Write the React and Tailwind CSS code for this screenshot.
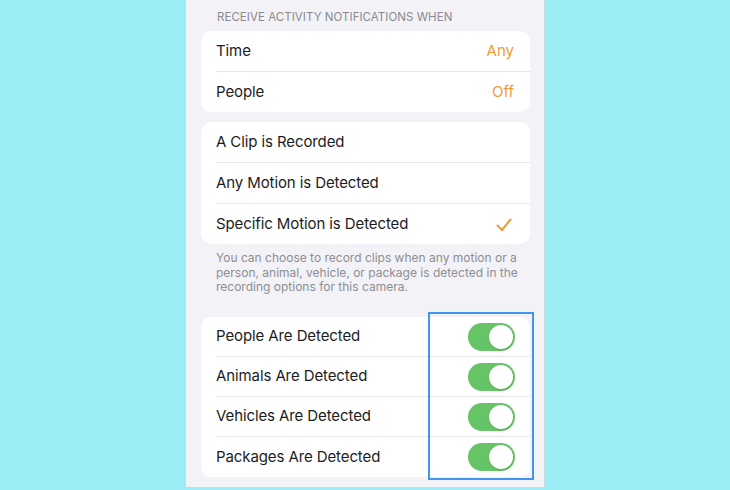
import React from "react";

const font = { fontFamily: "Inter, 'Noto Sans', 'Liberation Sans', sans-serif" };

function Row({ label, right, last, h = "h-[40px]" }) {
  return (
    <div>
      <div className={`flex items-center justify-between pl-[15px] pr-[16px] pt-[1px] ${h}`}>
        <span className="text-[15px] text-[#1c1c1e] tracking-[-0.1px]">{label}</span>
        {right}
      </div>
      {!last && <div className="ml-[15px] h-px bg-[#e6e6eb]" />}
    </div>
  );
}

function Toggle() {
  return (
    <div className="w-[47px] h-[28px] -mr-[1px] rounded-full bg-[#65c466] flex items-center justify-end pr-[2px]">
      <div className="w-[24px] h-[24px] rounded-full bg-white shadow-[0_1px_2px_rgba(0,0,0,0.15)]" />
    </div>
  );
}

function Check() {
  return (
    <svg width="16" height="14" viewBox="0 0 16 14" className="mr-[2px]">
      <path d="M1.5 7.5 L6 12 L14.5 1.5" fill="none" stroke="#f19a38" strokeWidth="2" strokeLinecap="round" strokeLinejoin="round" />
    </svg>
  );
}

const orange = "text-[15px] text-[#f19a38]";

export default function App() {
  return (
    <div className="w-[730px] h-[490px] bg-[#9aedf4] flex justify-center overflow-hidden" style={font}>
      <div className="relative w-[360px] h-[488px] bg-[#f2f2f7] border-x border-b border-[#cfd8dc] pl-[15px] pr-[14px]">
        <div className="pt-[10px] pl-[16px] text-[11.5px] leading-[14px] text-[#8a8a8e] tracking-[0.05px]">
          RECEIVE ACTIVITY NOTIFICATIONS WHEN
        </div>
        <div className="mt-[7px] bg-white rounded-[10px] overflow-hidden">
          <Row label="Time" right={<span className={orange}>Any</span>} />
          <Row label="People" right={<span className={orange}>Off</span>} last />
        </div>
        <div className="mt-[10px] bg-white rounded-[10px] overflow-hidden">
          <Row label="A Clip is Recorded" />
          <Row label="Any Motion is Detected" />
          <Row label="Specific Motion is Detected" right={<Check />} last />
        </div>
        <div className="pt-[7px] pl-[15px] pr-[12px] text-[12px] leading-[14.5px] text-[#8e8e93]">
          You can choose to record clips when any motion or a person, animal, vehicle, or package is detected in the recording options for this camera.
        </div>
        <div className="mt-[22px] bg-white rounded-[10px] overflow-hidden">
          <Row label="People Are Detected" right={<Toggle />} h="h-[39px]" />
          <Row label="Animals Are Detected" right={<Toggle />} h="h-[39px]" />
          <Row label="Vehicles Are Detected" right={<Toggle />} h="h-[39px]" />
          <Row label="Packages Are Detected" right={<Toggle />} h="h-[40px]" last />
        </div>
        <div className="absolute left-[242px] top-[312px] w-[106px] h-[168px] border-2 border-[#4196ec] pointer-events-none" />
      </div>
    </div>
  );
}
